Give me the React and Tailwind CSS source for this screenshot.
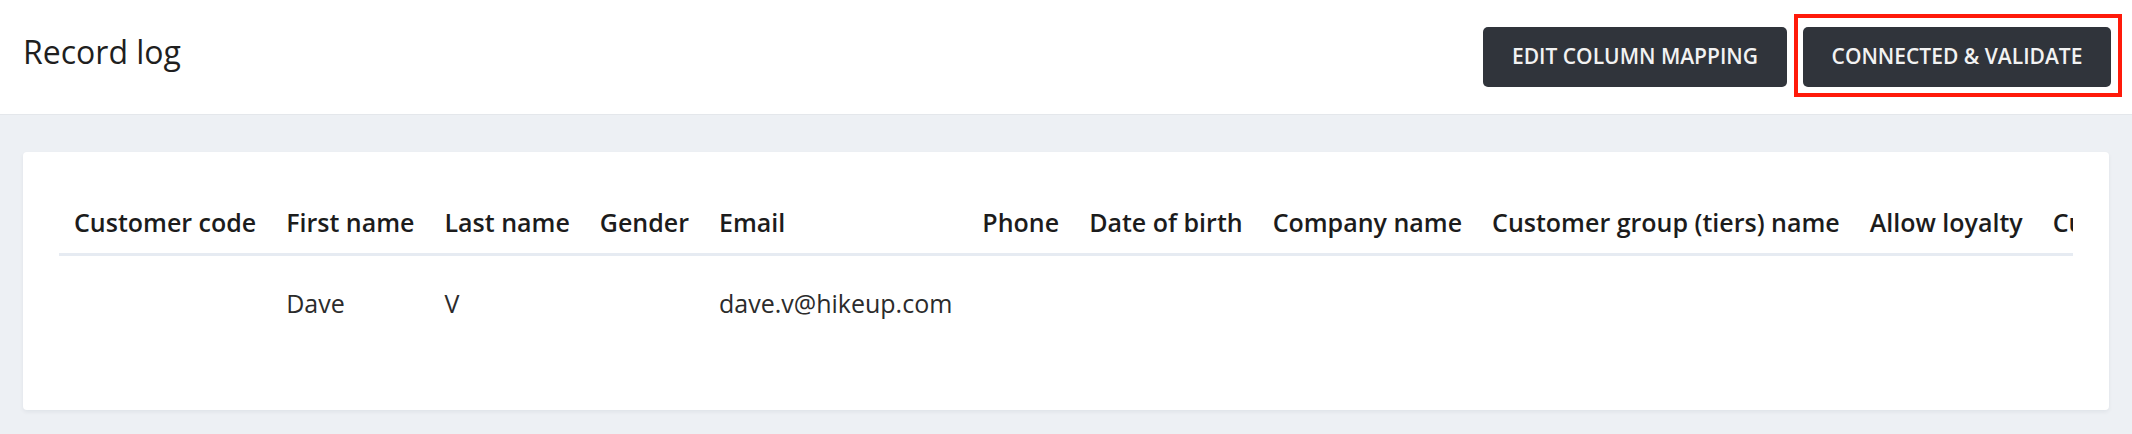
import React from 'react';

const columns = [
  'Customer code',
  'First name',
  'Last name',
  'Gender',
  'Email',
  'Phone',
  'Date of birth',
  'Company name',
  'Customer group (tiers) name',
  'Allow loyalty',
  'Customer since',
];

const rows = [
  { 'First name': 'Dave', 'Last name': 'V', Email: 'dave.v@hikeup.com' },
];

export default function App() {
  return (
    <div className="min-h-[434px] bg-[#edf0f4] font-['Open_Sans',sans-serif]">
      <header className="h-[115px] bg-white border-b border-[#e4e7eb] flex items-center justify-between pl-[23px] pr-[21px]">
        <h1 className="text-[32px] text-[#1f1f1f] leading-none -mt-[10px]">Record log</h1>
        <div className="flex items-center gap-[16px]">
          <button className="w-[304px] h-[60px] rounded-[5px] bg-[#30343b] text-[#f2f2f2] text-[21px] font-semibold uppercase">
            Edit column mapping
          </button>
          <div className="relative">
            <button className="w-[308px] h-[60px] rounded-[5px] bg-[#30343b] text-[#f2f2f2] text-[21px] font-semibold uppercase">
              Connected &amp; Validate
            </button>
            <span className="pointer-events-none absolute -left-[9px] -right-[11px] -top-[13px] -bottom-[10px] border-[4px] border-[#ff1a0a]"></span>
          </div>
        </div>
      </header>

      <main className="px-[23px] pt-[37px] pb-[25px]">
        <section className="bg-white rounded-[4px] shadow-[0_2px_4px_rgba(20,30,50,0.06)] px-[36px] pt-[36px] pb-[60px]">
          <div className="overflow-hidden">
            <table className="border-collapse whitespace-nowrap text-left">
              <thead>
                <tr className="border-b-[3px] border-[#e6ebf2]">
                  {columns.map((col) => (
                    <th key={col} className="px-[15px] pt-[16px] pb-[13px] text-[25px] leading-[36px] font-semibold text-[#1c1c1c]">
                      {col}
                    </th>
                  ))}
                </tr>
              </thead>
              <tbody>
                {rows.map((row, i) => (
                  <tr key={i}>
                    {columns.map((col) => (
                      <td key={col} className="px-[15px] pt-[29px] pb-[29px] text-[25px] leading-[36px] text-[#2b2b2b]">
                        {row[col] || ''}
                      </td>
                    ))}
                  </tr>
                ))}
              </tbody>
            </table>
          </div>
        </section>
      </main>
    </div>
  );
}
